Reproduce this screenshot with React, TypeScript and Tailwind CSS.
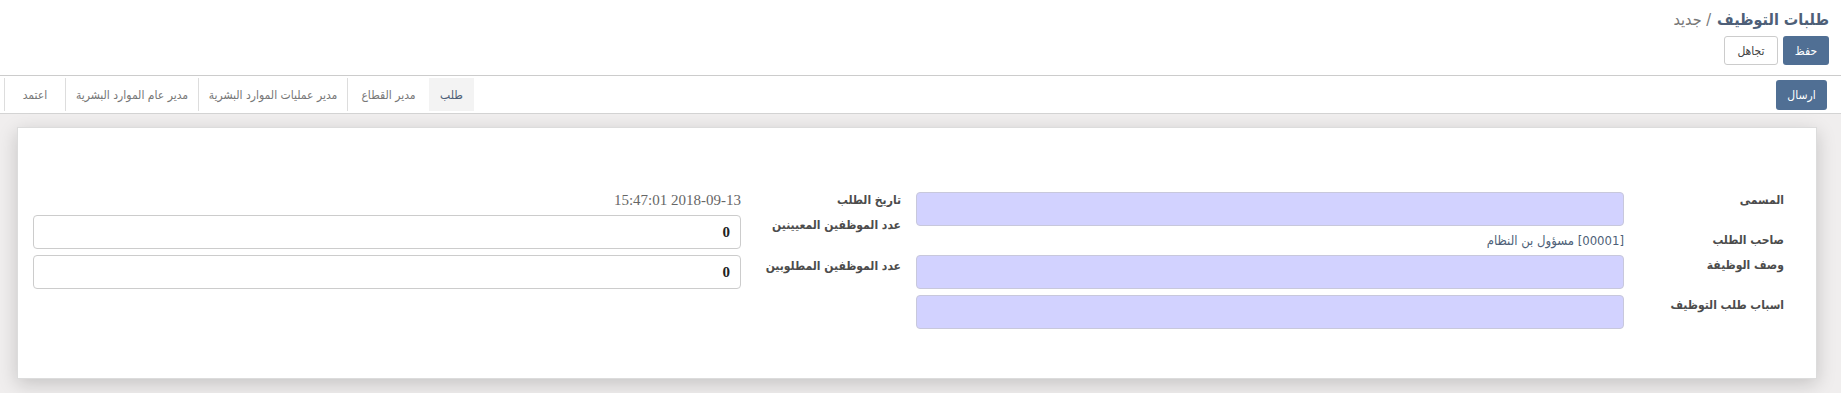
import React from "react";

const labelCls = "text-[12px] font-bold leading-[17px] text-[#4c4c4c]";

function Label({ children }: { children: React.ReactNode }) {
  return <div className={labelCls}>{children}</div>;
}

function PurpleInput() {
  return <div className="h-[34px] rounded-[4px] border border-[#c8c8dc] bg-[#d2d2ff]" />;
}

function NumberInput({ value }: { value: string }) {
  return (
    <div className="flex h-[34px] items-center rounded-[4px] border border-[#cccccc] bg-white px-[10px] font-['Liberation_Serif',serif] text-[15px] font-bold text-[#222]">
      {value}
    </div>
  );
}

const stages = [
  { name: "طلب", active: true, w: "w-[45px]" },
  { name: "مدير القطاع", w: "w-[82px]" },
  { name: "مدير عمليات الموارد البشرية", w: "w-[149px]" },
  { name: "مدير عام الموارد البشرية", w: "w-[133px]" },
  { name: "اعتمد", w: "w-[61px]" },
];

export default function App() {
  return (
    <div dir="rtl" className="min-h-[393px] w-full bg-[#f0eeee] font-['DejaVu_Sans_Condensed','DejaVu_Sans',sans-serif]">
      {/* Control panel */}
      <div className="h-[76px] border-b border-[#cccccc] bg-white pr-[12px] pt-[8px]">
        <div className="flex items-center gap-[6px] text-[16px] leading-[24px]">
          <span className="font-bold text-[#4e5f78]">طلبات التوظيف</span>
          <span className="text-[#777]">/ جديد</span>
        </div>
        <div className="mt-[4px] flex gap-[5px]">
          <button className="h-[29px] w-[46px] rounded-[3px] bg-[#506f94] text-[12px] text-white">حفظ</button>
          <button className="h-[29px] w-[54px] rounded-[3px] border border-[#cccccc] bg-white text-[12px] text-[#444]">تجاهل</button>
        </div>
      </div>

      {/* Status bar */}
      <div className="flex h-[38px] items-center justify-between border-b border-[#d4d4d4] bg-white">
        <button className="mr-[14px] h-[30px] w-[51px] rounded-[3px] bg-[#506f94] text-[12px] text-white">ارسال</button>
        <div className="ml-[4px] flex h-[33px]">
          {stages.map((s) => (
            <div
              key={s.name}
              className={`flex items-center justify-center text-[12px] ${s.w} ${
                s.active ? "bg-[#f3f3f3] text-[#4e5f78]" : "border-l border-[#dddddd] text-[#777]"
              }`}
            >
              {s.name}
            </div>
          ))}
        </div>
      </div>

      {/* Sheet */}
      <div className="ml-[17px] mr-[24px] mt-[13px] h-[252px] border border-[#dcdcdc] bg-white pl-[15px] pr-[32px] pt-[64px] shadow-[0_5px_18px_rgba(0,0,0,0.18)]">
        <div className="grid grid-cols-2 gap-[15px]">
          {/* Right group */}
          <div className="grid grid-cols-[160px_1fr] content-start">
            <Label>المسمى</Label>
            <PurpleInput />
            <div className="py-[6px]">
              <Label>صاحب الطلب</Label>
            </div>
            <div className="py-[6px] text-[13px] leading-[17px] text-[#4e5f78]">[00001] مسؤول بن النظام</div>
            <div className="pt-[2px]">
              <Label>وصف الوظيفة</Label>
            </div>
            <PurpleInput />
            <div className="pt-[8px]">
              <Label>اسباب طلب التوظيف</Label>
            </div>
            <div className="pt-[6px]">
              <PurpleInput />
            </div>
          </div>

          {/* Left group */}
          <div className="grid grid-cols-[160px_1fr] content-start gap-y-[6px]">
            <Label>تاريخ الطلب</Label>
            <div className="h-[17px] font-['Liberation_Serif',serif] text-[15px] leading-[17px] text-[#666]">2018-09-13 15:47:01</div>
            <div className="pt-[2px]">
              <Label>عدد الموظفين المعيينين</Label>
            </div>
            <NumberInput value="0" />
            <div className="pt-[3px]">
              <Label>عدد الموظفين المطلوبين</Label>
            </div>
            <NumberInput value="0" />
          </div>
        </div>
      </div>
    </div>
  );
}
